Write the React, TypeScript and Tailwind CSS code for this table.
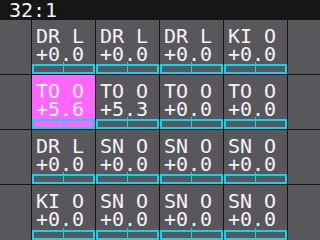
const pads = [
  [
    { name: 'DR L', value: '+0.0' },
    { name: 'DR L', value: '+0.0' },
    { name: 'DR L', value: '+0.0' },
    { name: 'KI O', value: '+0.0' },
  ],
  [
    { name: 'TO O', value: '+5.6', active: true },
    { name: 'TO O', value: '+5.3' },
    { name: 'TO O', value: '+0.0' },
    { name: 'TO O', value: '+0.0' },
  ],
  [
    { name: 'DR L', value: '+0.0' },
    { name: 'SN O', value: '+0.0' },
    { name: 'SN O', value: '+0.0' },
    { name: 'SN O', value: '+0.0' },
  ],
  [
    { name: 'KI O', value: '+0.0' },
    { name: 'SN O', value: '+0.0' },
    { name: 'SN O', value: '+0.0' },
    { name: 'SN O', value: '+0.0' },
  ],
];

type Pad = { name: string; value: string; active?: boolean };

function PadCell({ pad }: { pad: Pad }) {
  return (
    <div
      className={`flex flex-col ${pad.active ? 'bg-[#ff66ff]' : 'bg-[#58575b]'}`}
    >
      <div className="pl-[4px] pt-[7px] text-[20px] leading-[18px] text-[#f4f4f4] whitespace-pre">
        <div>{pad.name}</div>
        <div>{pad.value}</div>
      </div>
      {/* level bar with centre tick */}
      <div className="relative mt-auto h-[10px] border-2 border-[#10d4ee]">
        <div className="absolute left-[29px] top-[-4px] bottom-[-2px] w-px bg-[#10d4ee]" />
      </div>
    </div>
  );
}

export default function App() {
  return (
    <div
      className="w-[320px] h-[240px] bg-[#161616] overflow-hidden"
      style={{ fontFamily: '"DejaVu Sans Mono", "Liberation Mono", monospace' }}
    >
      <div className="h-[20px] pl-[9px] text-[20px] leading-[20px] text-[#f4f4f4]">
        32:1
      </div>
      <div className="grid grid-cols-[31px_63px_63px_63px_63px_32px] grid-rows-[54px_54px_54px_55px] gap-px">
        {pads.map((row, r) => (
          <div key={r} className="contents">
            <div className="bg-[#58575b]" />
            {row.map((pad, c) => (
              <PadCell key={c} pad={pad} />
            ))}
            <div className="bg-[#58575b]" />
          </div>
        ))}
      </div>
    </div>
  );
}
